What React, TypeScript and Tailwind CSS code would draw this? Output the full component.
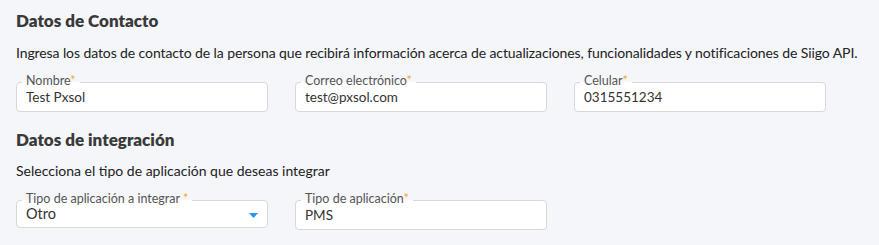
import React from 'react'

const font = { fontFamily: '"Lato", "Open Sans", sans-serif' }

type FieldProps = {
  label: string
  value: string
  select?: boolean
}

const Field = ({ label, value, select }: FieldProps) => {
  return (
    <div className="relative w-[251.5px]">
      <div
        className={`flex items-center justify-between bg-white border border-[#d6d9dc] rounded-[4px] pl-[9px] pr-[9px] ${
          select ? 'h-[28px] text-[14.5px]' : 'h-[30px] text-[13.5px]'
        } text-[#333]`}
      >
        <span>{value}</span>
        {select && (
          <svg width="9" height="5" viewBox="0 0 9 5" className="mt-[2px]">
            <path d="M0 0 L9 0 L4.5 5 Z" fill="#2196f3" />
          </svg>
        )}
      </div>
      <label className="absolute left-[6px] -top-[9px] px-[4px] text-[12.5px] leading-[15px] text-[#555] bg-[linear-gradient(to_bottom,#f4f6f9_60%,#ffffff_60%)]">
        {label}
        <span className="text-[#f5a623]">{select ? ' *' : '*'}</span>
      </label>
    </div>
  )
}

const App = () => {
  const contactFields = [
    { label: 'Nombre', value: 'Test Pxsol' },
    { label: 'Correo electrónico', value: 'test@pxsol.com' },
    { label: 'Celular', value: '0315551234' }
  ]

  return (
    <div className="w-full h-[245px] bg-[#f4f6f9] px-4 pt-[12px] overflow-hidden" style={font}>
      {/* Contacto */}
      <h2 className="text-[17px] leading-[18px] font-extrabold text-[#3a3a3a]">Datos de Contacto</h2>
      <p className="mt-[14px] text-[14px] leading-[18px] text-[#222] whitespace-nowrap tracking-[-0.1px]">
        Ingresa los datos de contacto de la persona que recibirá información acerca de actualizaciones, funcionalidades y
        notificaciones de Siigo API.
      </p>
      <div className="flex gap-[27.5px] mt-[20px]">
        {contactFields.map((f, i) => (
          <Field key={i} label={f.label} value={f.value} />
        ))}
      </div>

      {/* Integración */}
      <h2 className="mt-[19px] text-[17px] leading-[18px] font-extrabold text-[#3a3a3a]">Datos de integración</h2>
      <p className="mt-[13px] text-[14px] leading-[18px] text-[#222]">
        Selecciona el tipo de aplicación que deseas integrar
      </p>
      <div className="flex gap-[27.5px] mt-[20px]">
        <Field label="Tipo de aplicación a integrar" value="Otro" select />
        <Field label="Tipo de aplicación" value="PMS" />
      </div>
    </div>
  )
}

export default App
